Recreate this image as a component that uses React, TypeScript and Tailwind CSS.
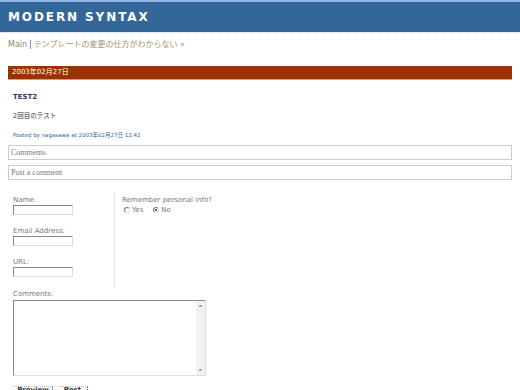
export default function App() {
  const label = "text-[7px] leading-[8px] text-[#777]";
  const input =
    "mt-[1px] h-[10px] w-[60px] border border-t-[#888] border-l-[#888] border-b-[#ddd] border-r-[#ddd] bg-white";
  const btn =
    "flex h-[16px] items-start justify-center border border-dotted border-t-[#bbb] border-l-[#eee] border-r-solid border-r-[#666] border-b-[#666] bg-white text-[7px] font-bold leading-[7px] text-[#333]";

  return (
    <div className="min-h-screen bg-white font-['DejaVu_Sans','Noto_Sans_CJK_JP',sans-serif]">
      {/* Banner */}
      <header className="border-t-2 border-[#8db6e6] bg-[#336699]">
        <div className="flex h-[30px] items-center px-2">
          <h1 className="text-[12px] font-bold leading-none tracking-[1.9px] text-white">
            MODERN SYNTAX
          </h1>
        </div>
        <div className="border-b border-dotted border-[#c4d6ea] bg-white" />
      </header>

      {/* Breadcrumb */}
      <div className="mt-[7px] px-2 text-[8px] leading-[10px] text-[#99996a]">
        <span className="text-[#8a8a6a]">Main</span>
        <span className="mx-[2px] text-[#336699]">|</span>
        <span>テンプレートの変更の仕方がわからない »</span>
      </div>

      {/* Date bar */}
      <div className="mx-2 mt-[16px] flex h-[14px] items-center border-b border-[#c9a08a] bg-[#993300] pl-1 text-[7px] text-white">
        2003年02月27日
      </div>

      {/* Entry */}
      <div className="pl-[13px]">
        <div className="mt-[13px] text-[7px] font-bold leading-[8px] text-[#333366]">TEST2</div>
        <div className="mt-[11px] text-[6.5px] leading-[8px] text-[#333]">2回目のテスト</div>
        <div className="mt-[11px] text-[5.5px] leading-[8px] text-[#336699]">
          Posted by nagasawa at 2003年02月27日 12:42
        </div>
      </div>

      <div className="mx-2 mt-[6px] flex h-[15px] items-center border border-[#cccccc] px-[2px] font-['Liberation_Serif',serif] text-[8px] text-[#777]">
        Comments
      </div>
      <div className="mx-2 mt-[5px] flex h-[15px] items-center border border-[#cccccc] px-[2px] font-['Liberation_Serif',serif] text-[8px] text-[#777]">
        Post a comment
      </div>

      {/* Comment form */}
      <div className="mt-[13px] flex pl-[13px]">
        <div className="h-[95px] w-[102px] border-r border-[#e3e3e3]">
          <div className={`mt-[3px] ${label}`}>Name:</div>
          <div className={input} />
          <div className={`mt-[12px] ${label}`}>Email Address:</div>
          <div className={input} />
          <div className={`mt-[12px] ${label}`}>URL:</div>
          <div className={input} />
        </div>
        <div className="pl-[7px]">
          <div className={`mt-[3px] ${label}`}>Remember personal info?</div>
          <div className={`mt-[2px] flex items-center ${label}`}>
            <span className="ml-[2px] h-[6px] w-[6px] rounded-full border border-t-[#777] border-l-[#777] border-b-[#ddd] border-r-[#ddd] bg-white" />
            <span className="ml-[2px]">Yes</span>
            <span className="ml-[10px] flex h-[6px] w-[6px] items-center justify-center rounded-full border border-t-[#777] border-l-[#777] border-b-[#ddd] border-r-[#ddd] bg-white">
              <span className="h-[2px] w-[2px] rounded-full bg-[#333]" />
            </span>
            <span className="ml-[2px]">No</span>
          </div>
        </div>
      </div>

      <div className="pl-[13px]">
        <div className={`mt-[2px] ${label}`}>Comments:</div>
        <div className="mt-[2px] flex h-[76px] w-[193px] border border-t-[#888] border-l-[#888] border-b-[#ddd] border-r-[#ddd] bg-white">
          <div className="flex-1" />
          <div className="flex w-[9px] flex-col items-center justify-between bg-[#f1f1f1] py-[4px]">
            <span className="h-[2px] w-[3px] bg-[#aaa]" />
            <span className="h-[2px] w-[3px] bg-[#aaa]" />
          </div>
        </div>
        <div className="mt-[10px] flex gap-[4px]">
          <button className={`w-[40px] ${btn}`}>Preview</button>
          <button className={`w-[31px] ${btn}`}>Post</button>
        </div>
      </div>
    </div>
  );
}
